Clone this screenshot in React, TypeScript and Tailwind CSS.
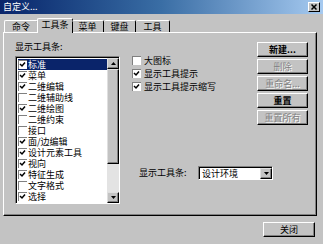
import React from "react";

const font = { fontFamily: '"Noto Sans CJK SC", "Noto Sans", sans-serif' };

function T({ children, className = "" }: { children: React.ReactNode; className?: string }) {
  return <span className={`block text-[9px] leading-[10px] h-[10px] whitespace-nowrap ${className}`}>{children}</span>;
}

function Check({ on }: { on: boolean }) {
  return (
    <div className="w-[9px] h-[9px] shrink-0 border-t border-l border-[#808080] border-r-white border-b-white bg-white relative">
      {on && (
        <svg viewBox="0 0 7 7" className="absolute left-0 top-0 w-[7px] h-[7px]">
          <path d="M1 3 L3 5 L6 1.5" stroke="#000" strokeWidth="1.5" fill="none" />
        </svg>
      )}
    </div>
  );
}

const items: [string, boolean][] = [
  ["标准", true],
  ["菜单", true],
  ["二维编辑", true],
  ["二维辅助线", false],
  ["二维绘图", true],
  ["二维约束", false],
  ["接口", false],
  ["面/边编辑", true],
  ["设计元素工具", true],
  ["视向", true],
  ["特征生成", true],
  ["文字格式", false],
  ["选择", true],
];

function Btn({ label, disabled, bold }: { label: string; disabled?: boolean; bold?: boolean }) {
  return (
    <div className="h-[15px] w-[51px] border border-t-white border-l-white border-r-black border-b-black shadow-[inset_-1px_-1px_0_#808080] flex items-center justify-center">
      <T className={`${disabled ? "text-[#808080] [text-shadow:1px_1px_0_#fff]" : "text-black"} ${bold ? "font-bold" : ""}`}>{label}</T>
    </div>
  );
}

function Arrow({ up }: { up: boolean }) {
  return (
    <div className="h-[11px] w-[12px] border border-t-[#dfdfdf] border-l-[#dfdfdf] border-r-black border-b-black shadow-[inset_-1px_-1px_0_#808080] bg-[#c3c3c3] flex items-center justify-center">
      <svg viewBox="0 0 5 3" className="w-[5px] h-[3px]">
        {up ? <path d="M0 3 L2.5 0 L5 3Z" fill="#000" /> : <path d="M0 0 L2.5 3 L5 0Z" fill="#000" />}
      </svg>
    </div>
  );
}

export default function App() {
  return (
    <div className="w-[323px] h-[244px] bg-[#c3c3c3] flex flex-col overflow-hidden" style={font}>
      {/* title bar */}
      <div className="h-[14px] bg-gradient-to-r from-[#0a246a] via-[#3a6ea5] to-[#a6caf0] flex items-center pl-[3px] pr-[3px]">
        <T className="text-white">自定义...</T>
        <div className="ml-auto h-[10px] w-[12px] bg-[#c3c3c3] border border-t-white border-l-white border-r-black border-b-black flex items-center justify-center">
          <svg viewBox="0 0 6 6" className="w-[6px] h-[6px]">
            <path d="M0.5 0.5 L5.5 5.5 M5.5 0.5 L0.5 5.5" stroke="#000" strokeWidth="1.5" />
          </svg>
        </div>
      </div>

      {/* tabs */}
      <div className="h-[14px] mt-[4px] flex items-end pl-[4px] relative z-10">
        <div className="h-[12px] w-[34px] border-t border-l border-white border-r border-r-black rounded-t-[2px] flex items-center justify-center"><T>命令</T></div>
        <div className="h-[15px] -mb-px w-[36px] -mx-[1px] bg-[#c3c3c3] border-t border-l border-white border-r border-r-black rounded-t-[2px] flex items-center justify-center pb-[2px]"><T>工具条</T></div>
        <div className="h-[12px] w-[32px] border-t border-white border-r border-r-black rounded-t-[2px] flex items-center justify-center"><T>菜单</T></div>
        <div className="h-[12px] w-[32px] border-t border-white border-r border-r-black rounded-t-[2px] flex items-center justify-center"><T>键盘</T></div>
        <div className="h-[12px] w-[34px] border-t border-white border-r border-r-black rounded-t-[2px] flex items-center justify-center"><T>工具</T></div>
      </div>

      {/* panel */}
      <div className="ml-[3px] w-[314px] h-[184px] border border-t-white border-l-white border-r-black border-b-black shadow-[inset_-1px_-1px_0_#808080] flex">
        {/* left */}
        <div className="pl-[11px] pt-[8px] flex flex-col">
          <div className="h-[12px] mb-[3px] flex items-center"><T>显示工具条:</T></div>
          <div className="w-[105px] h-[148px] border border-t-[#808080] border-l-[#808080] border-r-white border-b-white bg-white flex">
            <div className="flex-1 border-t border-l border-black flex flex-col pt-[1px] pl-[1px]">
              {items.map(([t, on], i) => (
                <div
                  key={t}
                  className={`h-[11px] flex items-center gap-[1px] ${i === 0 ? "bg-[#0a246a] text-white" : "text-black"}`}
                >
                  <Check on={on} />
                  <T>{t}</T>
                </div>
              ))}
            </div>
            <div className="w-[12px] flex flex-col border-t border-black bg-[#c3c3c3]">
              <Arrow up />
              <div className="h-[95px] border border-t-[#dfdfdf] border-l-[#dfdfdf] border-r-black border-b-black shadow-[inset_-1px_-1px_0_#808080]" />
              <div className="flex-1 bg-[#e3e3e3]" />
              <Arrow up={false} />
            </div>
          </div>
        </div>

        {/* right */}
        <div className="flex-1 pl-[12px] pr-[8px] pt-[9px] flex flex-col">
          <div className="flex">
            <div className="mt-[12px] flex flex-col">
              {([
                ["大图标", false],
                ["显示工具提示", true],
                ["显示工具提示缩写", true],
              ] as [string, boolean][]).map(([t, on]) => (
                <div key={t} className="h-[13px] flex items-center gap-[3px]">
                  <Check on={on} />
                  <T>{t}</T>
                </div>
              ))}
            </div>
            <div className="ml-auto flex flex-col gap-[2px]">
              <Btn label="新建..." bold />
              <Btn label="删除" disabled />
              <Btn label="重命名..." disabled />
              <Btn label="重置" bold />
              <Btn label="重置所有" disabled />
            </div>
          </div>
          <div className="mt-[41px] h-[14px] flex items-center">
            <div className="ml-[7px] w-[59px]"><T>显示工具条:</T></div>
            <div className="w-[75px] h-[14px] border border-t-[#808080] border-l-[#808080] border-r-white border-b-white bg-white flex">
              <div className="flex-1 border-t border-l border-black flex items-center pl-[2px]"><T>设计环境</T></div>
              <div className="w-[12px] border-t border-black">
                <div className="h-[11px] w-[12px] border border-t-[#dfdfdf] border-l-[#dfdfdf] border-r-black border-b-black shadow-[inset_-1px_-1px_0_#808080] bg-[#c3c3c3] flex items-center justify-center">
                  <svg viewBox="0 0 5 3" className="w-[5px] h-[3px]">
                    <path d="M0 0 L2.5 3 L5 0Z" fill="#000" />
                  </svg>
                </div>
              </div>
            </div>
          </div>
        </div>
      </div>

      {/* bottom */}
      <div className="mt-[6px] flex justify-end pr-[8px]">
        <div className="h-[15px] w-[52px] border border-t-white border-l-white border-r-black border-b-black shadow-[inset_-1px_-1px_0_#808080] flex items-center justify-center">
          <T>关闭</T>
        </div>
      </div>
    </div>
  );
}
